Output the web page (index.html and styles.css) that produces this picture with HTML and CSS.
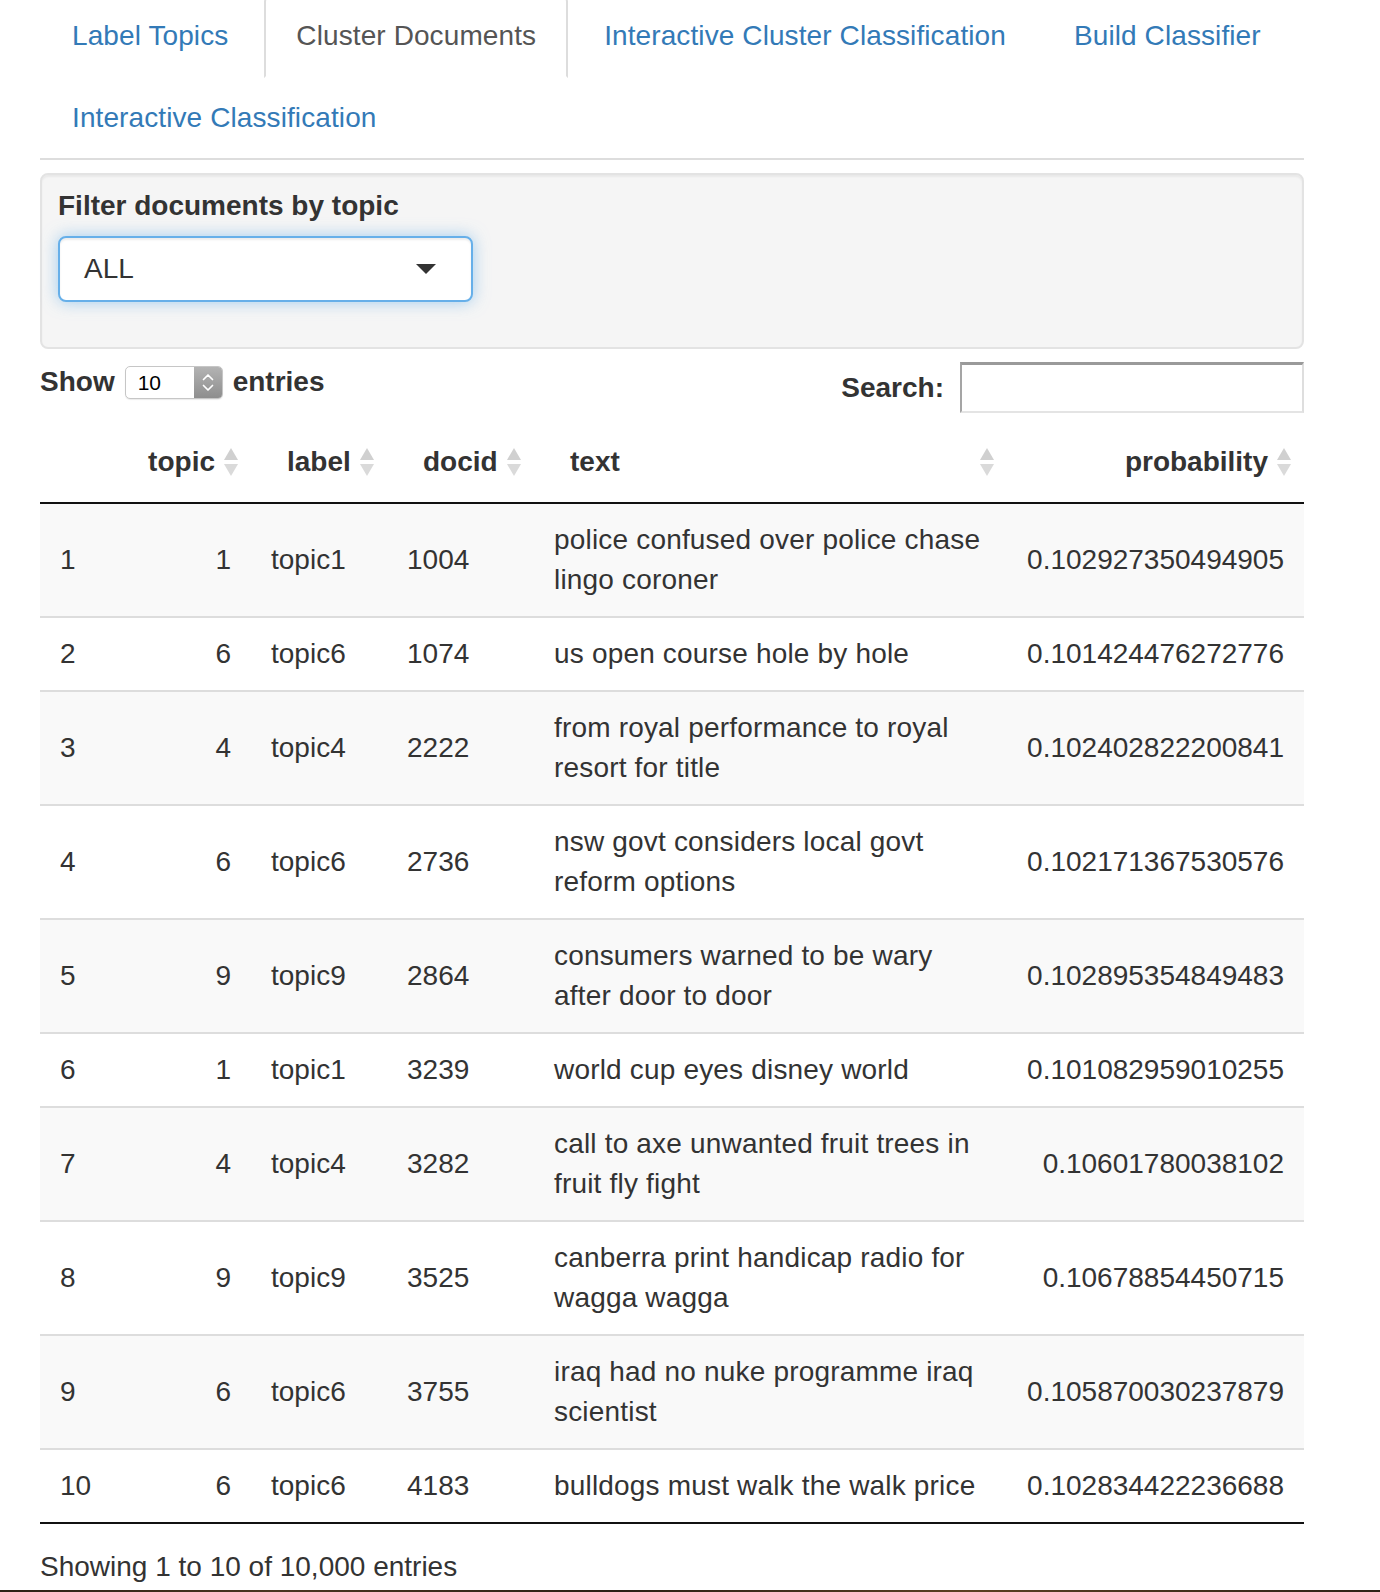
FILE: index.html
```html
<!DOCTYPE html>
<html>
<head>
<meta charset="utf-8">
<title>Cluster Documents</title>
<link rel="stylesheet" href="styles.css">
</head>
<body>
<div class="page">
  <ul class="tabs">
    <li><a href="#">Label Topics</a></li>
    <li class="active"><a href="#">Cluster Documents</a></li>
    <li><a href="#">Interactive Cluster Classification</a></li>
    <li><a href="#">Build Classifier</a></li>
    <li><a href="#">Interactive Classification</a></li>
  </ul>

  <div class="well">
    <div class="form-group">
      <label class="control-label">Filter documents by topic</label>
      <div class="selectize">
        <span class="sel-value">ALL</span>
        <span class="caret"></span>
      </div>
    </div>
  </div>

  <div class="dt-controls">
    <div class="dt-length">
      <span class="bold">Show</span>
      <span class="native-select">
        <span class="ns-value">10</span>
        <span class="ns-stepper">
          <svg width="28" height="31" viewBox="0 0 28 31"><path d="M9.5 12.5 L14 8 L18.5 12.5" fill="none" stroke="#fff" stroke-width="1.7" stroke-linecap="round" stroke-linejoin="round"/><path d="M9.5 18.5 L14 23 L18.5 18.5" fill="none" stroke="#fff" stroke-width="1.7" stroke-linecap="round" stroke-linejoin="round"/></svg>
        </span>
      </span>
      <span class="bold">entries</span>
    </div>
    <div class="dt-filter">
      <span class="bold">Search:</span>
      <span class="search-input"></span>
    </div>
  </div>

  <table class="dt">
    <colgroup>
      <col class="c-idx"><col class="c-topic"><col class="c-label"><col class="c-docid"><col class="c-text"><col class="c-prob">
    </colgroup>
    <thead>
      <tr>
        <th class="th-empty"></th>
        <th><div class="th-in right"><span>topic</span><span class="sort"></span></div></th>
        <th><div class="th-in"><span>label</span><span class="sort"></span></div></th>
        <th><div class="th-in"><span>docid</span><span class="sort"></span></div></th>
        <th><div class="th-in"><span>text</span><span class="sort"></span></div></th>
        <th><div class="th-in right"><span>probability</span><span class="sort"></span></div></th>
      </tr>
    </thead>
    <tbody>
      <tr><td>1</td><td class="r">1</td><td>topic1</td><td>1004</td><td class="txt">police confused over police chase lingo coroner</td><td class="r">0.102927350494905</td></tr>
      <tr><td>2</td><td class="r">6</td><td>topic6</td><td>1074</td><td class="txt">us open course hole by hole</td><td class="r">0.101424476272776</td></tr>
      <tr><td>3</td><td class="r">4</td><td>topic4</td><td>2222</td><td class="txt">from royal performance to royal resort for title</td><td class="r">0.102402822200841</td></tr>
      <tr><td>4</td><td class="r">6</td><td>topic6</td><td>2736</td><td class="txt">nsw govt considers local govt reform options</td><td class="r">0.102171367530576</td></tr>
      <tr><td>5</td><td class="r">9</td><td>topic9</td><td>2864</td><td class="txt">consumers warned to be wary after door to door</td><td class="r">0.102895354849483</td></tr>
      <tr><td>6</td><td class="r">1</td><td>topic1</td><td>3239</td><td class="txt">world cup eyes disney world</td><td class="r">0.101082959010255</td></tr>
      <tr><td>7</td><td class="r">4</td><td>topic4</td><td>3282</td><td class="txt">call to axe unwanted fruit trees in fruit fly fight</td><td class="r">0.10601780038102</td></tr>
      <tr><td>8</td><td class="r">9</td><td>topic9</td><td>3525</td><td class="txt">canberra print handicap radio for wagga wagga</td><td class="r">0.10678854450715</td></tr>
      <tr><td>9</td><td class="r">6</td><td>topic6</td><td>3755</td><td class="txt">iraq had no nuke programme iraq scientist</td><td class="r">0.105870030237879</td></tr>
      <tr><td>10</td><td class="r">6</td><td>topic6</td><td>4183</td><td class="txt">bulldogs must walk the walk price</td><td class="r">0.102834422236688</td></tr>
    </tbody>
  </table>

  <div class="dt-info">Showing 1 to 10 of 10,000 entries</div>
</div>
<div class="desk-strip"></div>
</body>
</html>
```

FILE: styles.css
```css
html, body {
  margin: 0;
  padding: 0;
  background: #fff;
}
body {
  font-family: "Liberation Sans", Arial, sans-serif;
  font-size: 28px;
  line-height: 40px;
  color: #333;
  overflow: hidden;
}
.page {
  margin-left: 40px;
  width: 1264px;
}

/* tabs */
.tabs {
  list-style: none;
  margin: -6px 0 0 0;
  padding: 0;
  display: flex;
  flex-wrap: wrap;
  border-bottom: 2px solid #ddd;
}
.tabs li {
  margin-bottom: -2px;
}
.tabs a {
  display: block;
  padding: 20px 30px;
  line-height: 40px;
  margin-right: 4px;
  border: 2px solid transparent;
  border-radius: 8px 8px 0 0;
  color: #337ab7;
  text-decoration: none;
  letter-spacing: 0.1px;
}
.tabs li.active a {
  color: #555;
  background: #fff;
  border-color: #ddd #ddd transparent #ddd;
}

/* well */
.well {
  margin-top: 13px;
  background: #f5f5f5;
  border: 2px solid #e3e3e3;
  border-radius: 8px;
  box-shadow: inset 0 2px 2px rgba(0,0,0,0.05);
  padding: 11px 16px 15px 16px;
}
.form-group {
  margin-bottom: 30px;
}
.control-label {
  display: block;
  font-weight: bold;
  margin-bottom: 10px;
}
.selectize {
  width: 415px;
  box-sizing: border-box;
  height: 66px;
  display: flex;
  align-items: center;
  background: #fff;
  border: 2px solid #66afe9;
  border-radius: 8px;
  box-shadow: inset 0 2px 2px rgba(0,0,0,0.075), 0 0 16px rgba(102,175,233,0.6);
  padding: 0 35px 0 24px;
}
.sel-value {
  flex: 1;
  color: #333;
}
.caret {
  width: 0;
  height: 0;
  border-style: solid;
  border-width: 10px 10px 0 10px;
  border-color: #333 transparent transparent transparent;
}

/* datatable controls */
.dt-controls {
  margin-top: 13px;
  display: flex;
  justify-content: space-between;
  align-items: flex-start;
}
.bold {
  font-weight: bold;
}
.dt-length {
  display: flex;
  align-items: center;
  gap: 10px;
  height: 40px;
}
.native-select {
  display: inline-flex;
  width: 98px;
  height: 33px;
  box-sizing: border-box;
  border: 1px solid #c6c6c6;
  border-radius: 5px;
  overflow: hidden;
  background: #fff;
  box-shadow: 0 1px 1px rgba(0,0,0,0.08);
}
.ns-value {
  flex: 1;
  font-size: 21px;
  line-height: 31px;
  color: #000;
  padding-left: 12px;
}
.ns-stepper {
  width: 28px;
  height: 31px;
  display: flex;
  background: linear-gradient(#b3b3b3, #8e8e8e);
}
.dt-filter {
  display: flex;
  align-items: center;
  gap: 16px;
}
.search-input {
  display: block;
  width: 344px;
  height: 51px;
  box-sizing: border-box;
  background: #fff;
  border-style: solid;
  border-width: 3px 2px 2px 2px;
  border-color: #9a9a9a #dedede #e4e4e4 #a5a5a5;
}

/* table */
.dt {
  margin-top: 9px;
  width: 1264px;
  table-layout: fixed;
  border-collapse: separate;
  border-spacing: 0;
  border-bottom: 2px solid #111;
}
.c-idx { width: 90px; }
.c-topic { width: 121px; }
.c-label { width: 136px; }
.c-docid { width: 147px; }
.c-text { width: 473px; }
.c-prob { width: 297px; }

.dt th {
  font-weight: bold;
  text-align: left;
  padding: 20px 12px 20px 36px;
  border-bottom: 2px solid #111;
  vertical-align: middle;
}
.th-in {
  display: flex;
  align-items: center;
  justify-content: space-between;
}
.th-in.right {
  justify-content: flex-end;
  gap: 9px;
}
.sort {
  display: block;
  width: 15px;
  height: 28px;
  flex: none;
}
.sort::before, .sort::after {
  content: "";
  display: block;
  width: 0;
  height: 0;
  border-style: solid;
}
.sort::before {
  border-width: 0 7.5px 12px 7.5px;
  border-color: transparent transparent #d0d0d0 transparent;
}
.sort::after {
  margin-top: 4px;
  border-width: 12px 7.5px 0 7.5px;
  border-color: #dadada transparent transparent transparent;
}
.dt td {
  padding: 16px 20px;
  border-top: 2px solid #ddd;
  vertical-align: middle;
  text-align: left;
}
.dt td.txt {
  letter-spacing: 0.18px;
}
.dt tbody tr:first-child td {
  border-top: none;
}
.dt tbody tr:nth-child(odd) td {
  background: #f9f9f9;
}
.dt td.r {
  text-align: right;
}

.dt-info {
  padding-top: 23px;
}

.desk-strip {
  margin-top: 3px;
  height: 3px;
  background: linear-gradient(90deg, #2b2016, #4a3520 20%, #2a1f15 45%, #5a3f22 70%, #2e2217);
}
```
